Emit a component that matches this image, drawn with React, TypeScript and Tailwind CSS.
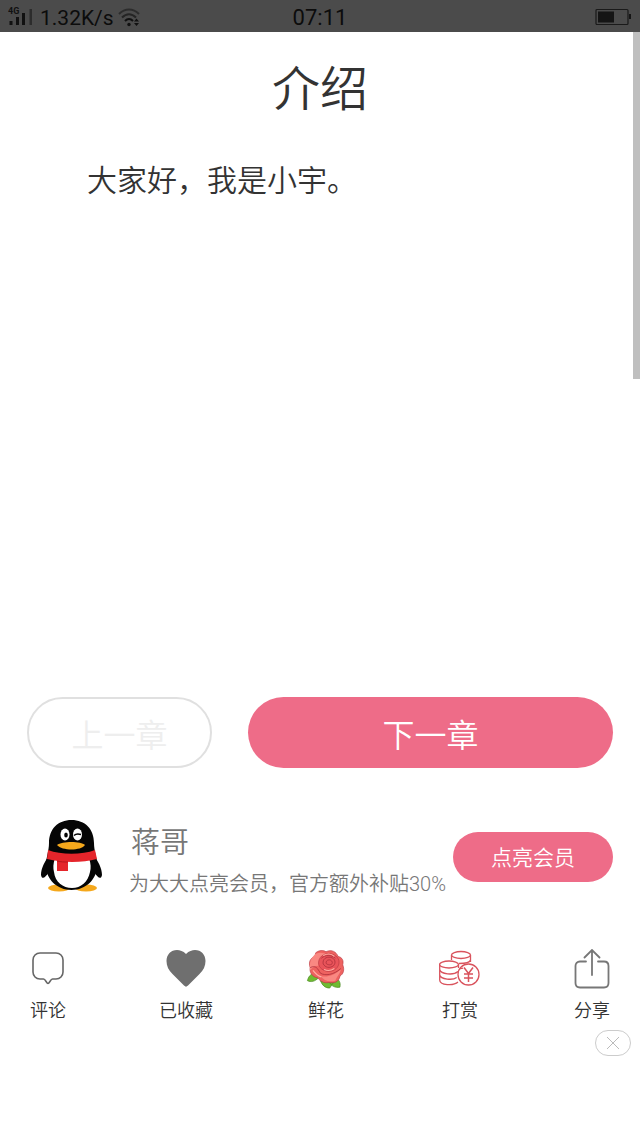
import type { ReactNode } from 'react';

const StatusBar = () => (
  <header className="grid h-8 grid-cols-3 items-center bg-[#4b4b4b] px-2 font-[Roboto,'Noto_Sans_CJK_SC',sans-serif] text-[22px] leading-8 text-[#0c0c0c]">
    <div className="flex items-center gap-2">
      <svg width="24" height="20" viewBox="0 0 24 20" aria-hidden="true">
        <text x="0" y="7" fontSize="9" fontWeight="700" fill="#111">4G</text>
        <path d="M1.500 14h3v4h-3zM8 10h3v8H8zM14 6h3v12h-3z" fill="#111" />
        <path d="M21.500 2h2.500v16h-2.500z" fill="#2c2c2c" />
      </svg>
      <span className="pt-[2px] text-[21px]">1.32K/s</span>
      <svg className="-ml-1" width="22" height="20" viewBox="0 0 22 20" fill="none" strokeWidth="2" aria-hidden="true">
        <path d="M1 7C7 1 15 1 21 7" stroke="#2c2c2c" />
        <path d="M4 10.500c4.500-4.500 9.500-4.500 14 0" stroke="#242424" />
        <path d="M7 14c2.500-2.700 5.500-2.700 8 0" stroke="#111" />
        <circle cx="11" cy="17.500" r="1.700" fill="#111" />
        <path d="M18.500 11.500 21 14.500h-5zM18.500 19 21 16h-5z" fill="#111" />
      </svg>
    </div>
    <time className="pt-[2px] text-center">07:11</time>
    <svg className="justify-self-end" width="37" height="18" viewBox="0 0 37 18" aria-hidden="true">
      <rect x="1" y="1.500" width="32" height="15" rx="1" fill="none" stroke="#1a1a1a" strokeWidth="1.200" />
      <path d="M3 3.500h16v11H3zM34 6h2v5h-2z" fill="#151515" />
    </svg>
  </header>
);

const PenguinAvatar = () => (
  <svg className="shrink-0" width="64" height="74" viewBox="0 0 64 74" role="img" aria-label="蒋哥">
    <ellipse cx="19" cy="69" rx="11" ry="3.500" fill="#f5a81c" />
    <ellipse cx="46" cy="69" rx="11" ry="3.500" fill="#f5a81c" />
    <path d="M10 35C5 42 1 49 1 56c1 5 4 3 8-3zM53 35c5 7 9 14 9 21-1 5-4 3-8-3z" fill="#050505" />
    <path d="M31.500 1C18 1 9 10 9 24c0 8-3 14-3 23 0 13 11 24 25.500 24S57 60 57 47c0-9-3-15-3-23C54 10 45 1 31.500 1z" fill="#050505" />
    <path d="M15 39h34c2 6 2 10 1 14-2 10-9 16-18 16s-17-6-18-16c-1-4-1-8 1-14z" fill="#fff" />
    <path d="M8 31c13 5 34 5 47 0l2 9c-15 4-34 4-50 0z" fill="#e5252b" />
    <path d="M17 40h11v12H17z" fill="#e5252b" />
    <path d="M17 42c4 1 7 1 11 1" fill="none" stroke="#b5161c" />
    <ellipse cx="25" cy="15.500" rx="4.500" ry="6" fill="#fff" />
    <ellipse cx="37.500" cy="15.500" rx="4.500" ry="6" fill="#fff" />
    <ellipse cx="26" cy="16" rx="1.800" ry="2.600" fill="#050505" />
    <path d="M34 16.500c2-2 4-2 7-1" fill="none" stroke="#050505" strokeWidth="1.500" />
    <path d="M17 26c5-4 24-4 28 0-4 6-23 6-28 0z" fill="#f5a81c" />
  </svg>
);

const CommentIcon = () => (
  <svg width="36" height="40" viewBox="0 0 36 40" fill="none" stroke="#666" strokeWidth="1.600" strokeLinejoin="round">
    <path d="M10 4h16c4 0 7 3 7 7v12c0 4-3 7-7 7h-3.500c-2 0-3 4.500-4.500 4.500S15.500 30 13.500 30H10c-4 0-7-3-7-7V11c0-4 3-7 7-7z" />
  </svg>
);

const HeartIcon = () => (
  <svg width="40" height="40" viewBox="0 0 40 40" fill="#6f6f6f">
    <path d="M20 5C17 2 14 1 11 1 5 1 .500 5.500.500 12c0 5 2 9 6 13L18 36.500c1.500 1.500 2.500 1.500 4 0L33.500 25c4-4 6-8 6-13 0-6.500-4.500-11-10.500-11-3 0-6 1-9 4z" />
  </svg>
);

const RoseIcon = () => (
  <svg width="40" height="40" viewBox="-1 -1 42 43">
    <path d="M7 25c-4 1-6 4-7 8 4 2 8 1 12-3zM14 33c2 5 5 8 10 8l4-6zM24 35c2 4 6 6 11 5 1-5-1-8-4-9z" fill="#6fbb32" stroke="#45861e" strokeWidth=".7" />
    <path d="M9 3c4-3 8-3 11-1 6-3 11 0 13 5 5 1 6 5 5 9 2 5 1 10-3 12-1 7-7 8-12 7-5 1-9-1-12-5-6-1-9-6-8-11-2-6 0-10 5-12z" fill="#ee6260" stroke="#b83841" strokeWidth=".7" />
    <path d="M9 4c5-2 9-1 12 1-6 2-9 6-9 12-4 0-7 2-9 5-1-8 0-13 6-18zM14 28c7 2 15-1 22-7-1 5-4 7-6 12-7 2-12 0-16-5z" fill="#f98882" />
    <path d="M12 14c0-6 5-10 11-10s11 4 11 9c0 6-5 10-11 10-6 0-11-4-11-9z" fill="#e9545a" stroke="#b83841" strokeWidth=".7" />
    <path d="M15 9c4-4 11-4 15 0M17 15c-1-5 3-8 8-7 5 1 6 6 3 9-4 3-9 2-11-2zM20 14c0-3 3-4 5-3 3 2 2 5-1 5-2 0-4-1-4-2zM3 19c6-3 8 1 11 6 5 3 14 2 22-5" fill="none" stroke="#a72c38" strokeWidth=".8" />
    <path d="M17 6c4-2 9-2 12 1M18 21c4 2 8 1 11-1M6 22c3 4 5 6 9 7" fill="none" stroke="#ffb2a6" strokeWidth="1.200" />
  </svg>
);

const CoinsIcon = () => (
  <svg width="42" height="40" viewBox="0 0 42 40" fill="none" stroke="#d9535d" strokeWidth="1.300">
    <ellipse cx="22" cy="6" rx="9.500" ry="3.500" />
    <path d="M12.500 6v5M31.500 6v7M20 14.500c6 0 11-1 11.500-3.500M21 19.500c1 0 2 0 3-.300" />
    <ellipse cx="10" cy="15.500" rx="9.500" ry="3.500" />
    <path d="M.700 15.500V31c0 5.500 14 6 18.300 2M19.500 15.500V19M.700 20.500c1 5 14 6 18.300 2M.700 26c1 4.500 13 5.500 17 2.500" />
    <circle cx="29.500" cy="25.500" r="10.500" />
    <path d="m25 18.500 4.500 6 4.500-6M29.500 24.500v8.500M25 25h9M25 29h9" strokeWidth="1.500" />
  </svg>
);

const ShareIcon = () => (
  <svg width="36" height="40" viewBox="0 0 36 40" fill="none" stroke="#777" strokeWidth="1.800" strokeLinecap="round">
    <path d="M12 12.500H6c-3 0-4.500 2-4.500 4.500V34c0 3 2 4.500 4.500 4.500h24c3 0 4.500-2 4.500-4.500V17c0-3-2-4.500-4.500-4.500h-6" />
    <path d="M18 26V1.500M10.500 8.500 18 1 25.500 8.500" />
  </svg>
);

const actions: { label: string; icon: ReactNode }[] = [
  { label: '评论', icon: <CommentIcon /> },
  { label: '已收藏', icon: <HeartIcon /> },
  { label: '鲜花', icon: <RoseIcon /> },
  { label: '打赏', icon: <CoinsIcon /> },
  { label: '分享', icon: <ShareIcon /> },
];

const App = () => {
  return (
    <div className="relative flex min-h-screen flex-col bg-white font-['Noto_Sans_CJK_SC',sans-serif] text-[#333]">
      <StatusBar />
      <div className="absolute top-8 right-0 h-[347px] w-[7px] bg-[#bfbfbf]"></div>

      <main className="flex flex-1 flex-col">
        <article className="flex-1 px-[87px] pt-[18px] font-[350]">
          <h1 className="text-center text-[48px] leading-[70px]">介绍</h1>
          <p className="mt-9 text-[30px] leading-[44px]">大家好，我是小宇。</p>
        </article>

        <nav className="grid grid-cols-[37fr_73fr] gap-9 px-[27px] font-[350]">
          <button disabled className="h-[71px] rounded-full border-2 border-[#e0e0e0] text-[32px] text-[#eee]">
            上一章
          </button>
          <button className="h-[71px] rounded-full bg-[#ee6c88] text-[32px] text-white">
            下一章
          </button>
        </nav>

        <section className="mt-[51px] flex items-start pr-[27px] pl-10 font-[350]">
          <PenguinAvatar />
          <div className="ml-[25px] flex-1 whitespace-nowrap text-[#777]">
            <h2 className="pl-[2px] text-[29px] leading-[43px]">蒋哥</h2>
            <p className="text-[20px] leading-[41px]">
              为大大点亮会员，官方额外补贴<span className="font-[Roboto,sans-serif] font-light">30%</span>
            </p>
          </div>
          <button className="mt-[13px] h-[50px] w-40 shrink-0 rounded-full bg-[#ee6c88] text-[21px] text-white">
            点亮会员
          </button>
        </section>

        <div className="mt-11 flex justify-between px-[30px] font-[350]">
          {actions.map(({ label, icon }) => (
            <button key={label} className="flex flex-col items-center gap-2 text-[18px] leading-6">
              <span className="flex h-10 items-center">{icon}</span>
              {label}
            </button>
          ))}
        </div>
      </main>

      <footer className="flex justify-end pt-[9px] pr-[9px] pb-[82px]">
        <button aria-label="关闭" className="flex h-[26px] w-9 items-center justify-center rounded-full border border-[#ccc]">
          <svg width="12" height="12" viewBox="0 0 12 12" stroke="#bbb" aria-hidden="true">
            <path d="m0 0 12 12M12 0 0 12" />
          </svg>
        </button>
      </footer>
    </div>
  );
};

export default App;
